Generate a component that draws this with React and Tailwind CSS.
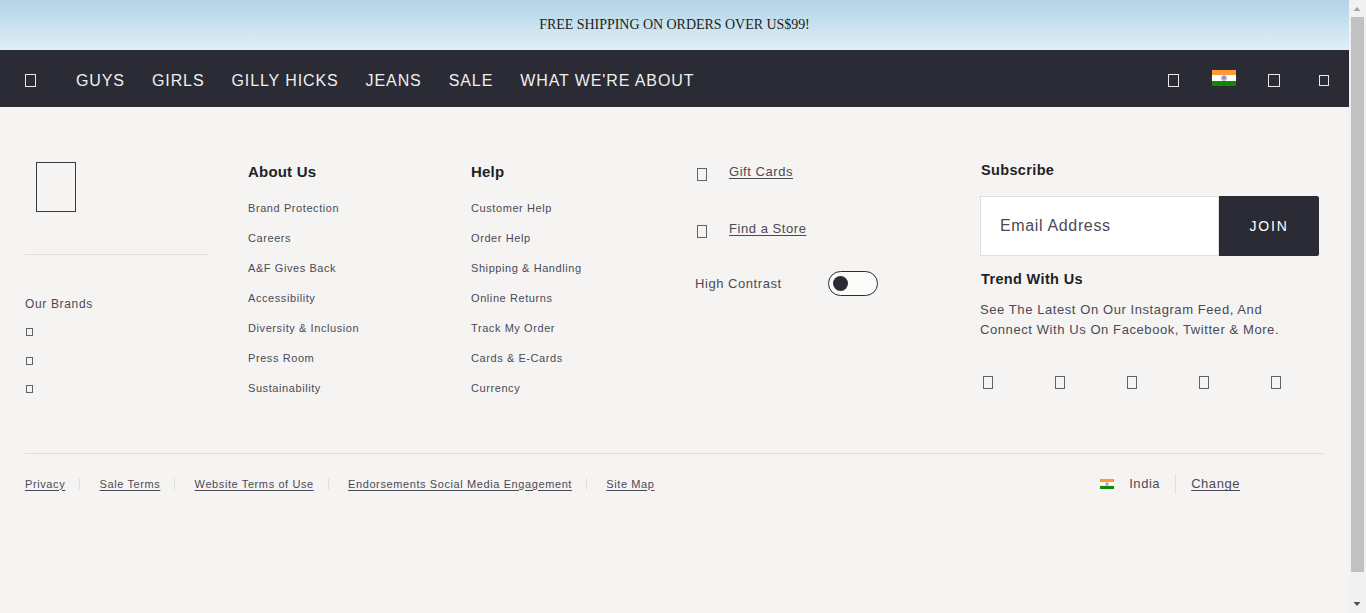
import React from "react";

const Box = ({ className }) => <span className={"block shrink-0 border " + className} />;

const Flag = ({ w, h }) => (
  <svg width={w} height={h} viewBox="0 0 24 16" className="block shrink-0" preserveAspectRatio="none">
    <rect width="24" height="16" fill="#fff" />
    <rect width="24" height="5" fill="#ff9933" />
    <rect y="11" width="24" height="5" fill="#128807" />
    <circle cx="12" cy="8" r="2.6" fill="#b9b9e6" stroke="#9a9ad8" strokeWidth="0.6" />
    <circle cx="12" cy="8" r="0.7" fill="#000080" />
  </svg>
);

const about = ["Brand Protection", "Careers", "A&F Gives Back", "Accessibility", "Diversity & Inclusion", "Press Room", "Sustainability"];
const help = ["Customer Help", "Order Help", "Shipping & Handling", "Online Returns", "Track My Order", "Cards & E-Cards", "Currency"];
const nav = ["GUYS", "GIRLS", "GILLY HICKS", "JEANS", "SALE", "WHAT WE'RE ABOUT"];
const legal = ["Privacy", "Sale Terms", "Website Terms of Use", "Endorsements Social Media Engagement"];

const LinkList = ({ title, items }) => (
  <div>
    <h3 className="mt-[55px] mb-[14px] text-[15px] leading-[20px] font-bold tracking-[0.2px] text-[#1f1f27]">{title}</h3>
    <ul className="flex flex-col">
      {items.map((t) => (
        <li key={t} className="h-[30px] text-[11px] leading-[24px] tracking-[0.58px] text-[#4a4a55]">{t}</li>
      ))}
    </ul>
  </div>
);

export default function App() {
  return (
    <div className="flex h-[613px] w-full overflow-hidden bg-[#f5f4f2] font-['Liberation_Sans',Arial,sans-serif]">
      <div className="flex w-[1349px] flex-col">
        <div className="flex h-[50px] items-center justify-center bg-gradient-to-b from-[#b2d4e6] to-[#e0eff7] pb-[2px] font-['Liberation_Serif',serif] text-[14px] tracking-[-0.04px] text-[#222]">
          FREE SHIPPING ON ORDERS OVER US$99!
        </div>

        <header className="flex h-[57px] items-start bg-[#2b2b35] text-white">
          <Box className="ml-[25px] mt-[24px] h-[13px] w-[11px] border-[#e8e8e8]" />
          <nav className="ml-[40px] mt-[19px] flex gap-[27px] text-[16px] tracking-[0.9px] text-[#f0efed]">
            {nav.map((n) => (
              <span key={n}>{n}</span>
            ))}
          </nav>
          <div className="ml-auto mr-[20px] flex items-start">
            <Box className="mt-[24px] h-[13px] w-[11px] border-[#e8e8e8]" />
            <div className="ml-[33px] mt-[20px]"><Flag w={24} h={16} /></div>
            <Box className="ml-[32px] mt-[24px] h-[13px] w-[12px] border-[#e8e8e8]" />
            <Box className="ml-[39px] mt-[25px] h-[11px] w-[10px] border-[#e8e8e8]" />
          </div>
        </header>

        <footer className="flex-1 px-[25px]">
          <div className="flex h-[347px] border-b border-[#e0dfd9]">
            <div className="w-[183px]">
              <Box className="ml-[11px] mt-[55px] h-[50px] w-[40px] border-[#3a3a45]" />
              <div className="mt-[42px] border-t border-[#e0dfd9]" />
              <p className="mt-[41px] text-[12px] leading-[16px] tracking-[0.65px] text-[#4a4a55]">Our Brands</p>
              <div className="mt-[16px] flex flex-col">
                <Box className="ml-[1px] h-[8px] w-[7px] border-[#62626d]" />
                <Box className="ml-[1px] mt-[21px] h-[8px] w-[7px] border-[#62626d]" />
                <Box className="ml-[1px] mt-[20px] h-[8px] w-[7px] border-[#62626d]" />
              </div>
            </div>
            <div className="ml-[40px] w-[223px]"><LinkList title="About Us" items={about} /></div>
            <div className="w-[224px]"><LinkList title="Help" items={help} /></div>

            <div className="w-[285px] pt-[56px] text-[13px] tracking-[0.55px] text-[#4a4a55]">
              <div className="flex h-[18px] items-start">
                <Box className="ml-[2px] mt-[5px] h-[13px] w-[10px] border-[#62626d]" />
                <span className="ml-[22px] leading-[18px] underline underline-offset-2">Gift Cards</span>
              </div>
              <div className="mt-[39px] flex h-[18px] items-start">
                <Box className="ml-[2px] mt-[5px] h-[13px] w-[10px] border-[#62626d]" />
                <span className="ml-[22px] leading-[18px] underline underline-offset-2">Find a Store</span>
              </div>
              <div className="mt-[33px] flex items-center">
                <span className="w-[133px] leading-[25px]">High Contrast</span>
                <span className="flex h-[25px] w-[50px] items-center rounded-full border border-[#2b2b35] bg-[#fbfbf9] pl-[4px]">
                  <span className="block h-[15px] w-[15px] rounded-full bg-[#2b2b35]" />
                </span>
              </div>
            </div>

            <div className="w-[344px]">
              <h3 className="ml-[1px] mt-[54px] text-[14.5px] leading-[18px] font-bold tracking-[0.35px] text-[#1f1f27]">Subscribe</h3>
              <div className="mt-[17px] flex h-[60px] w-[339px]">
                <div className="flex w-[239px] items-center border border-[#e0dfd9] bg-white pl-[19px] text-[16px] tracking-[0.65px] text-[#4a4a55]">Email Address</div>
                <div className="flex w-[100px] items-center justify-center rounded-r-[2px] bg-[#2b2b35] text-[14px] tracking-[1.8px] text-white">JOIN</div>
              </div>
              <h3 className="ml-[1px] mt-[14px] text-[14.5px] leading-[18px] font-bold tracking-[0.35px] text-[#1f1f27]">Trend With Us</h3>
              <p className="mt-[12px] text-[13px] leading-[20px] tracking-[0.58px] text-[#4a4a55]">
                See The Latest On Our Instagram Feed, And<br />Connect With Us On Facebook, Twitter &amp; More.
              </p>
              <div className="ml-[3px] mt-[36px] flex gap-[62px]">
                {[0, 1, 2, 3, 4].map((i) => (
                  <Box key={i} className="h-[13px] w-[10px] border-[#62626d]" />
                ))}
              </div>
            </div>
          </div>

          <div className="flex h-[60px] items-center text-[11px] tracking-[0.6px] text-[#4a4a55]">
            {legal.map((t) => (
              <React.Fragment key={t}>
                <span className="underline underline-offset-2">{t}</span>
                <span className="ml-[14px] mr-[19.25px] h-[12px] w-px bg-[#e0dfd9]" />
              </React.Fragment>
            ))}
            <span className="underline underline-offset-2">Site Map</span>
            <div className="ml-auto mr-[84px] flex items-center text-[13px] tracking-[0.55px]">
              <Flag w={14} h={10} />
              <span className="ml-[15px]">India</span>
              <span className="mx-[15px] h-[20px] w-px bg-[#e0dfd9]" />
              <span className="underline underline-offset-2">Change</span>
            </div>
          </div>
        </footer>
      </div>

      <div className="flex w-[17px] flex-col bg-[#f1f1f1]">
        <svg width="17" height="17" viewBox="0 0 17 17" className="block shrink-0"><path d="M4.5 11 L8 7 L11.5 11 Z" fill="#a3a3a3" /></svg>
        <div className="ml-[2px] h-[555px] w-[13px] shrink-0 bg-[#c1c1c1]" />
        <div className="flex-1" />
        <svg width="17" height="17" viewBox="0 0 17 17" className="block shrink-0"><path d="M4.5 6 L11.5 6 L8 10 Z" fill="#505050" /></svg>
      </div>
    </div>
  );
}
